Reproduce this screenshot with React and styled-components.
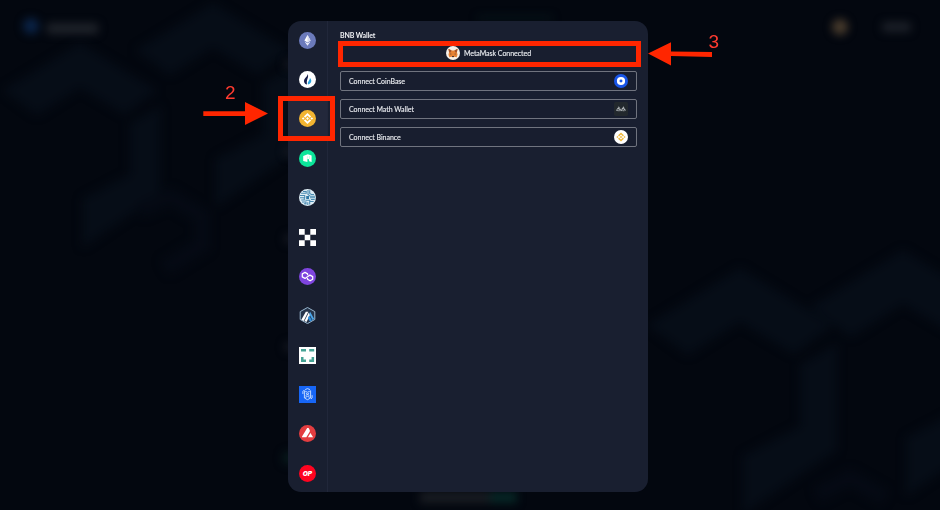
import React from "react";
import styled, { createGlobalStyle } from "styled-components";

const GlobalStyle = createGlobalStyle`
  body { margin: 0; background: #03060f; overflow: hidden; }
  * { box-sizing: border-box; }
`;

const Page = styled.div`
  position: relative;
  width: 940px;
  height: 510px;
  overflow: hidden;
  background: #03070f;
  font-family: Lato, "Open Sans", sans-serif;
  padding-top: 20.5px;
`;

const Overlay = styled.svg`
  position: absolute;
  inset: 0;
  width: 940px;
  height: 510px;
  pointer-events: none;
`;

const Modal = styled.main`
  position: relative;
  display: flex;
  width: 360px;
  height: 471px;
  margin: 0 auto 0 288px;
  border-radius: 13px;
  overflow: hidden;
  background: #191f30;
`;

const Sidebar = styled.nav`
  flex: none;
  width: 40px;
  height: 471px;
  display: grid;
  grid-auto-rows: 39.38px;
  border-right: 1px solid #21273a;
`;

const ChainButton = styled.button`
  display: flex;
  align-items: center;
  justify-content: center;
  padding: 0;
  border: 0;
  background: ${(p) => (p.$active ? "#23283b" : "transparent")};
`;

const ChainIcon = styled.svg`
  width: 17px;
  height: 17px;
  display: block;
`;

const Content = styled.section`
  flex: 1;
  display: flex;
  flex-direction: column;
  padding: 9px 11px 0 12px;
`;

const Title = styled.h1`
  margin: 0;
  height: 10px;
  font-size: 7px;
  line-height: 10px;
  font-weight: 700;
  letter-spacing: -0.12px;
  color: #f0f1f4;
`;

const WalletList = styled.div`
  display: flex;
  flex-direction: column;
  gap: 8px;
  margin-top: 3.5px;
`;

const WalletButton = styled.button`
  display: flex;
  align-items: center;
  justify-content: ${(p) => (p.$connected ? "center" : "space-between")};
  gap: 4px;
  width: 297px;
  height: 20px;
  padding: 0 8px;
  border: 1px solid ${(p) => (p.$connected ? "transparent" : "#70747f")};
  border-radius: 2px;
  background: #181e2f;
  color: #eceef2;
  font: 400 7px/10px Lato, sans-serif;
  -webkit-text-stroke: 0.12px #eceef2;
`;

const WalletLabel = styled.span`
  position: relative;
  height: 10px;
  letter-spacing: -0.03px;
  white-space: nowrap;
`;

const WalletIcon = styled.svg`
  width: 14px;
  height: 14px;
  flex: none;
`;

const Highlight = styled.div`
  position: absolute;
  left: ${(p) => p.$x}px;
  top: ${(p) => p.$y}px;
  width: ${(p) => p.$w}px;
  height: ${(p) => p.$h}px;
  border: 5px solid #ff2600;
`;

const StepNumber = styled.span`
  position: absolute;
  left: ${(p) => p.$x}px;
  top: ${(p) => p.$y}px;
  font: 400 19px/20px "Liberation Sans", sans-serif;
  color: #ff3b30;
`;

const BNB_MARK =
  "M8.5 2.9 4.9 6.5 6.2 7.8 8.5 5.5 10.8 7.8 12.1 6.5ZM2.9 8.5 4.2 7.2 5.5 8.5 4.2 9.8ZM8.5 7.1 9.9 8.5 8.5 9.9 7.1 8.5ZM11.5 8.5 12.8 7.2 14.1 8.5 12.8 9.8ZM4.9 10.5 6.2 9.2 8.5 11.5 10.8 9.2 12.1 10.5 8.5 14.1Z";

const Disc = ({ fill }) => <circle cx="8.5" cy="8.5" r="8.5" fill={fill} />;

const chains = [
  {
    name: "Ethereum",
    art: (
      <>
        <Disc fill="#6b7abb" />
        <path d="M8.5 3 5.4 8.6 8.5 10.4 11.6 8.6Z" fill="#fff" />
        <path d="M8.5 3V10.4L11.6 8.6Z" fill="#d8dcee" />
        <path d="M5.5 9.6 8.5 11.3 11.5 9.6 8.5 13.7Z" fill="#eef0fa" />
      </>
    ),
  },
  {
    name: "Huobi",
    art: (
      <>
        <Disc fill="#fff" />
        <path d="M8.8 3C9.5 5.2 8.9 6.7 8.4 8.1 7.8 9.6 7.6 11.5 8 13.6 5.1 12.7 4.4 10.2 5.6 8 6.8 6.3 8.3 5.4 8.8 3Z" fill="#151c48" />
        <path d="M10.9 7C13.1 8.8 12.9 12.5 9 13.6 8.2 10.9 10.7 9.5 10.9 7Z" fill="#2aa5df" />
      </>
    ),
  },
  { name: "BNB", art: <><Disc fill="#f2b431" /><path d={BNB_MARK} fill="#fff" /></> },
  {
    name: "Neo",
    art: (
      <>
        <Disc fill="#0ce59a" />
        <path d="M4.2 6 8.8 4.3 12.6 5.5V11.9L10.2 11.2 10 9.2 8.4 9.1V12L4.2 11Z" fill="#fff" />
        <path d="M8.4 6.2V9M10.5 5.9V9" stroke="#a5f5d5" strokeWidth=".5" />
      </>
    ),
  },
  {
    name: "Kava",
    art: (
      <>
        <Disc fill="#ddecf4" />
        <g fill="none" stroke="#488ab1" strokeWidth="1.05">
          <path d="M2.1 4.3H7.2V2M4 2.4H7M1 6.5H5.7V8.7H1M2.2 11H5.3V8.7M3 13H7V15.5M5 14.7H7M9 1V5.4L11.2 7.2H16M10.7 1.2V4.4L12.4 5.5H15M10.7 15.5V12.5H14.7M12 10.5H15.7M11 8.8H16.2M8.8 16V13.2M6.4 11.2H10.8V13" />
        </g>
        <path d="M7.2 7H10V10H7.2Z" fill="#2e78a5" />
      </>
    ),
  },
  {
    name: "OKX",
    art: <path d="M0 0H5.7V5.7H0ZM11.3 0H17V5.7H11.3ZM5.7 5.7H11.3V11.3H5.7ZM0 11.3H5.7V17H0ZM11.3 11.3H17V17H11.3Z" fill="#fff" />,
  },
  {
    name: "Polygon",
    art: (
      <>
        <Disc fill="#7f45df" />
        <path d="M8.6 7.2V5.9L6 4.4 3.3 5.9V8.9L6 10.4 11 7.1 13.7 8.6V11.3L11.1 12.8 8.5 11.3V10" fill="none" stroke="#fff" strokeWidth="1.25" strokeLinejoin="round" />
      </>
    ),
  },
  {
    name: "Arbitrum",
    art: (
      <>
        <path d="M8.5.5 15.8 4.6V12.5L8.5 16.6 1.2 12.5V4.6Z" fill="#26354b" stroke="#9ab8d0" strokeWidth="1" />
        <path d="M6.8 4.7H9.3L4.7 14.1 2.3 12.7Z" fill="#fff" />
        <path d="M9.8 5.5 11 7.9 7.5 15 5.5 14.1Z" fill="#fff" />
        <path d="M11.1 4.8 15.2 12.1 13.5 13.1 10.3 7Z" fill="#4ba6ea" />
        <path d="M10.1 8.4 13 13.4 11 14.6 8.8 11.2Z" fill="#2e91e2" />
      </>
    ),
  },
  {
    name: "Bridge network",
    art: (
      <>
        <path d="M0 0H17V17H0Z" fill="#fff" />
        <path d="M2 2H7V4.4H2ZM10.2 2H15.2V4.4H10.2ZM2 10H4.5V12.5H7V15H2ZM12.6 10H15.1V15H10.2V12.5H12.6Z" fill="#46a395" />
      </>
    ),
  },
  {
    name: "Fantom",
    art: (
      <>
        <path d="M0 0H17V17H0Z" fill="#1766f6" />
        <g fill="none" stroke="#d3e4ff" strokeWidth=".9">
          <path d="M6.2 3.6 8.5 2.6 11 3.6M5.4 4.4V12L8.5 13.7 11.6 12V4.4M6.2 5.2 8.5 6.3 10.8 5.2M6.8 7.2 10.4 9.6M10.2 7.2 6.6 9.6M6.2 11.4 8.5 10.3 10.8 11.4" />
          <path d="M3.9 8V5.4L5 4.2M13.1 9.2V11.8L12 13" />
        </g>
      </>
    ),
  },
  {
    name: "Avalanche",
    art: (
      <>
        <Disc fill="#e33d40" />
        <path d="M8.2 3 9.6 3.1 10.9 5.4 10.7 6.7 7.3 12.3H2.9L2.9 11.7ZM11.4 8 14.1 12.3H8.9Z" fill="#fff" />
      </>
    ),
  },
  {
    name: "Optimism",
    art: (
      <>
        <Disc fill="#ff0420" />
        <text x="8.4" y="10.9" textAnchor="middle" fontFamily="Inter, sans-serif" fontWeight="900" fontStyle="italic" fontSize="6.6" fill="#fff">OP</text>
      </>
    ),
  },
];

const wallets = [
  {
    label: "Connect CoinBase",
    art: <><Disc fill="#1855e8" /><circle cx="8.5" cy="8.5" r="3.4" fill="#1855e8" stroke="#fff" strokeWidth="3.2" /></>,
  },
  {
    label: "Connect Math Wallet",
    art: (
      <>
        <rect width="17" height="17" rx="2" fill="#22282d" />
        <path d="M3.2 10.6 5.8 6.9 8.2 10.6M8.8 10.6 11.3 6.9 13.9 10.6" fill="none" stroke="#b0b5b8" strokeWidth="1.9" strokeDasharray="1.7 .4" />
        <path d="M5 10.6H7M10.4 10.6H12.4" stroke="#9ba1a4" strokeWidth="1.2" />
      </>
    ),
  },
  { label: "Connect Binance", art: <><Disc fill="#fff" /><path d={BNB_MARK} fill="#efb83e" /></> },
];

const Fox = () => (
  <WalletIcon viewBox="0 0 17 17" aria-hidden="true">
    <Disc fill="#f7f1e9" />
    <path d="M3 3.2 6.8 5.4H10.2L14 3.2 13.3 7.6 14 10.7 12.9 13.7 10.3 13 9.5 13.8H7.5L6.7 13 4.1 13.7 3 10.7 3.7 7.6Z" fill="#e68335" />
    <path d="M3 3.2 6.8 5.4 5.5 8 3.7 7.5ZM14 3.2 10.2 5.4 11.5 8 13.3 7.5Z" fill="#a4542c" />
    <path d="M5.3 9 7.1 9.8 5.3 10.2ZM11.7 9 9.9 9.8 11.7 10.2ZM7.3 12.1H9.7V13.4H7.3Z" fill="#443334" />
  </WalletIcon>
);

const Hexes = () => (
  <path d="M0 0 93 57 54 86 0 54-52 87-93 57ZM60 97 97 76V182L3 246V188L60 158Z" />
);

const Backdrop = () => (
  <Overlay viewBox="0 0 940 510" aria-hidden="true">
    <defs>
      <filter id="soft" x="-30%" y="-30%" width="160%" height="160%" colorInterpolationFilters="sRGB"><feGaussianBlur stdDeviation="5" /></filter>
      <filter id="glow" x="-60%" y="-150%" width="220%" height="400%" colorInterpolationFilters="sRGB"><feGaussianBlur stdDeviation="4.5" /></filter>
    </defs>
    <g fill="#060d17" filter="url(#soft)">
      <g transform="translate(80 43) scale(.83)"><Hexes /></g>
      <g transform="translate(213 3) scale(.83)"><Hexes /></g>
      <g transform="translate(740 268)"><Hexes /></g>
      <g transform="translate(903 250)"><Hexes /></g>
      <g fill="none" stroke="#050a14" strokeWidth="16">
        <path d="M140 210 170 197 202 216V245L165 268" />
        <path d="M817 495 850 478 885 498" />
      </g>
    </g>
    <g filter="url(#glow)">
      <circle cx="31" cy="26" r="8" fill="#0a2347" />
      <rect x="46" y="23" width="53" height="11" rx="5" fill="#1e2229" />
      <circle cx="840" cy="27" r="8" fill="#483b2c" />
      <rect x="882" y="22" width="29" height="10" rx="4" fill="#1c2028" />
      <rect x="420" y="492" width="70" height="11" fill="#191c22" />
      <rect x="490" y="492" width="27" height="11" fill="#072726" />
      <rect x="478" y="16" width="74" height="4" fill="#06161a" />
      <g fill="#151923">
        <circle cx="289" cy="64" r="5" /><circle cx="289" cy="152" r="5" />
        <circle cx="289" cy="239" r="5" /><circle cx="289" cy="347" r="5" />
      </g>
      <circle cx="289" cy="458" r="7" fill="#07191c" />
    </g>
  </Overlay>
);

export default function App() {
  return (
    <Page>
      <GlobalStyle />
      <Backdrop />
      <Modal>
        <Sidebar>
          {chains.map((chain) => (
            <ChainButton key={chain.name} $active={chain.name === "BNB"} aria-label={chain.name}>
              <ChainIcon viewBox="0 0 17 17">{chain.art}</ChainIcon>
            </ChainButton>
          ))}
        </Sidebar>
        <Content>
          <Title>BNB Wallet</Title>
          <WalletList>
            <WalletButton $connected>
              <Fox />
              <WalletLabel>MetaMask Connected</WalletLabel>
            </WalletButton>
            {wallets.map((wallet) => (
              <WalletButton key={wallet.label}>
                <WalletLabel>{wallet.label}</WalletLabel>
                <WalletIcon viewBox="0 0 17 17" aria-hidden="true">{wallet.art}</WalletIcon>
              </WalletButton>
            ))}
          </WalletList>
        </Content>
      </Modal>
      <Highlight $x={278} $y={96} $w={57} $h={45} />
      <Highlight $x={338} $y={41} $w={303} $h={26} />
      <Overlay viewBox="0 0 940 510" aria-hidden="true">
        <g fill="#ff2600">
          <path d="M203.3 111.2H245V102L268 113.5 245 125V116H203.3Z" />
          <path d="M648 53.5 671 42.2V51.4L712 52.1V57L671 56V65.5Z" />
        </g>
      </Overlay>
      <StepNumber $x={225} $y={83}>2</StepNumber>
      <StepNumber $x={708.5} $y={32}>3</StepNumber>
    </Page>
  );
}
